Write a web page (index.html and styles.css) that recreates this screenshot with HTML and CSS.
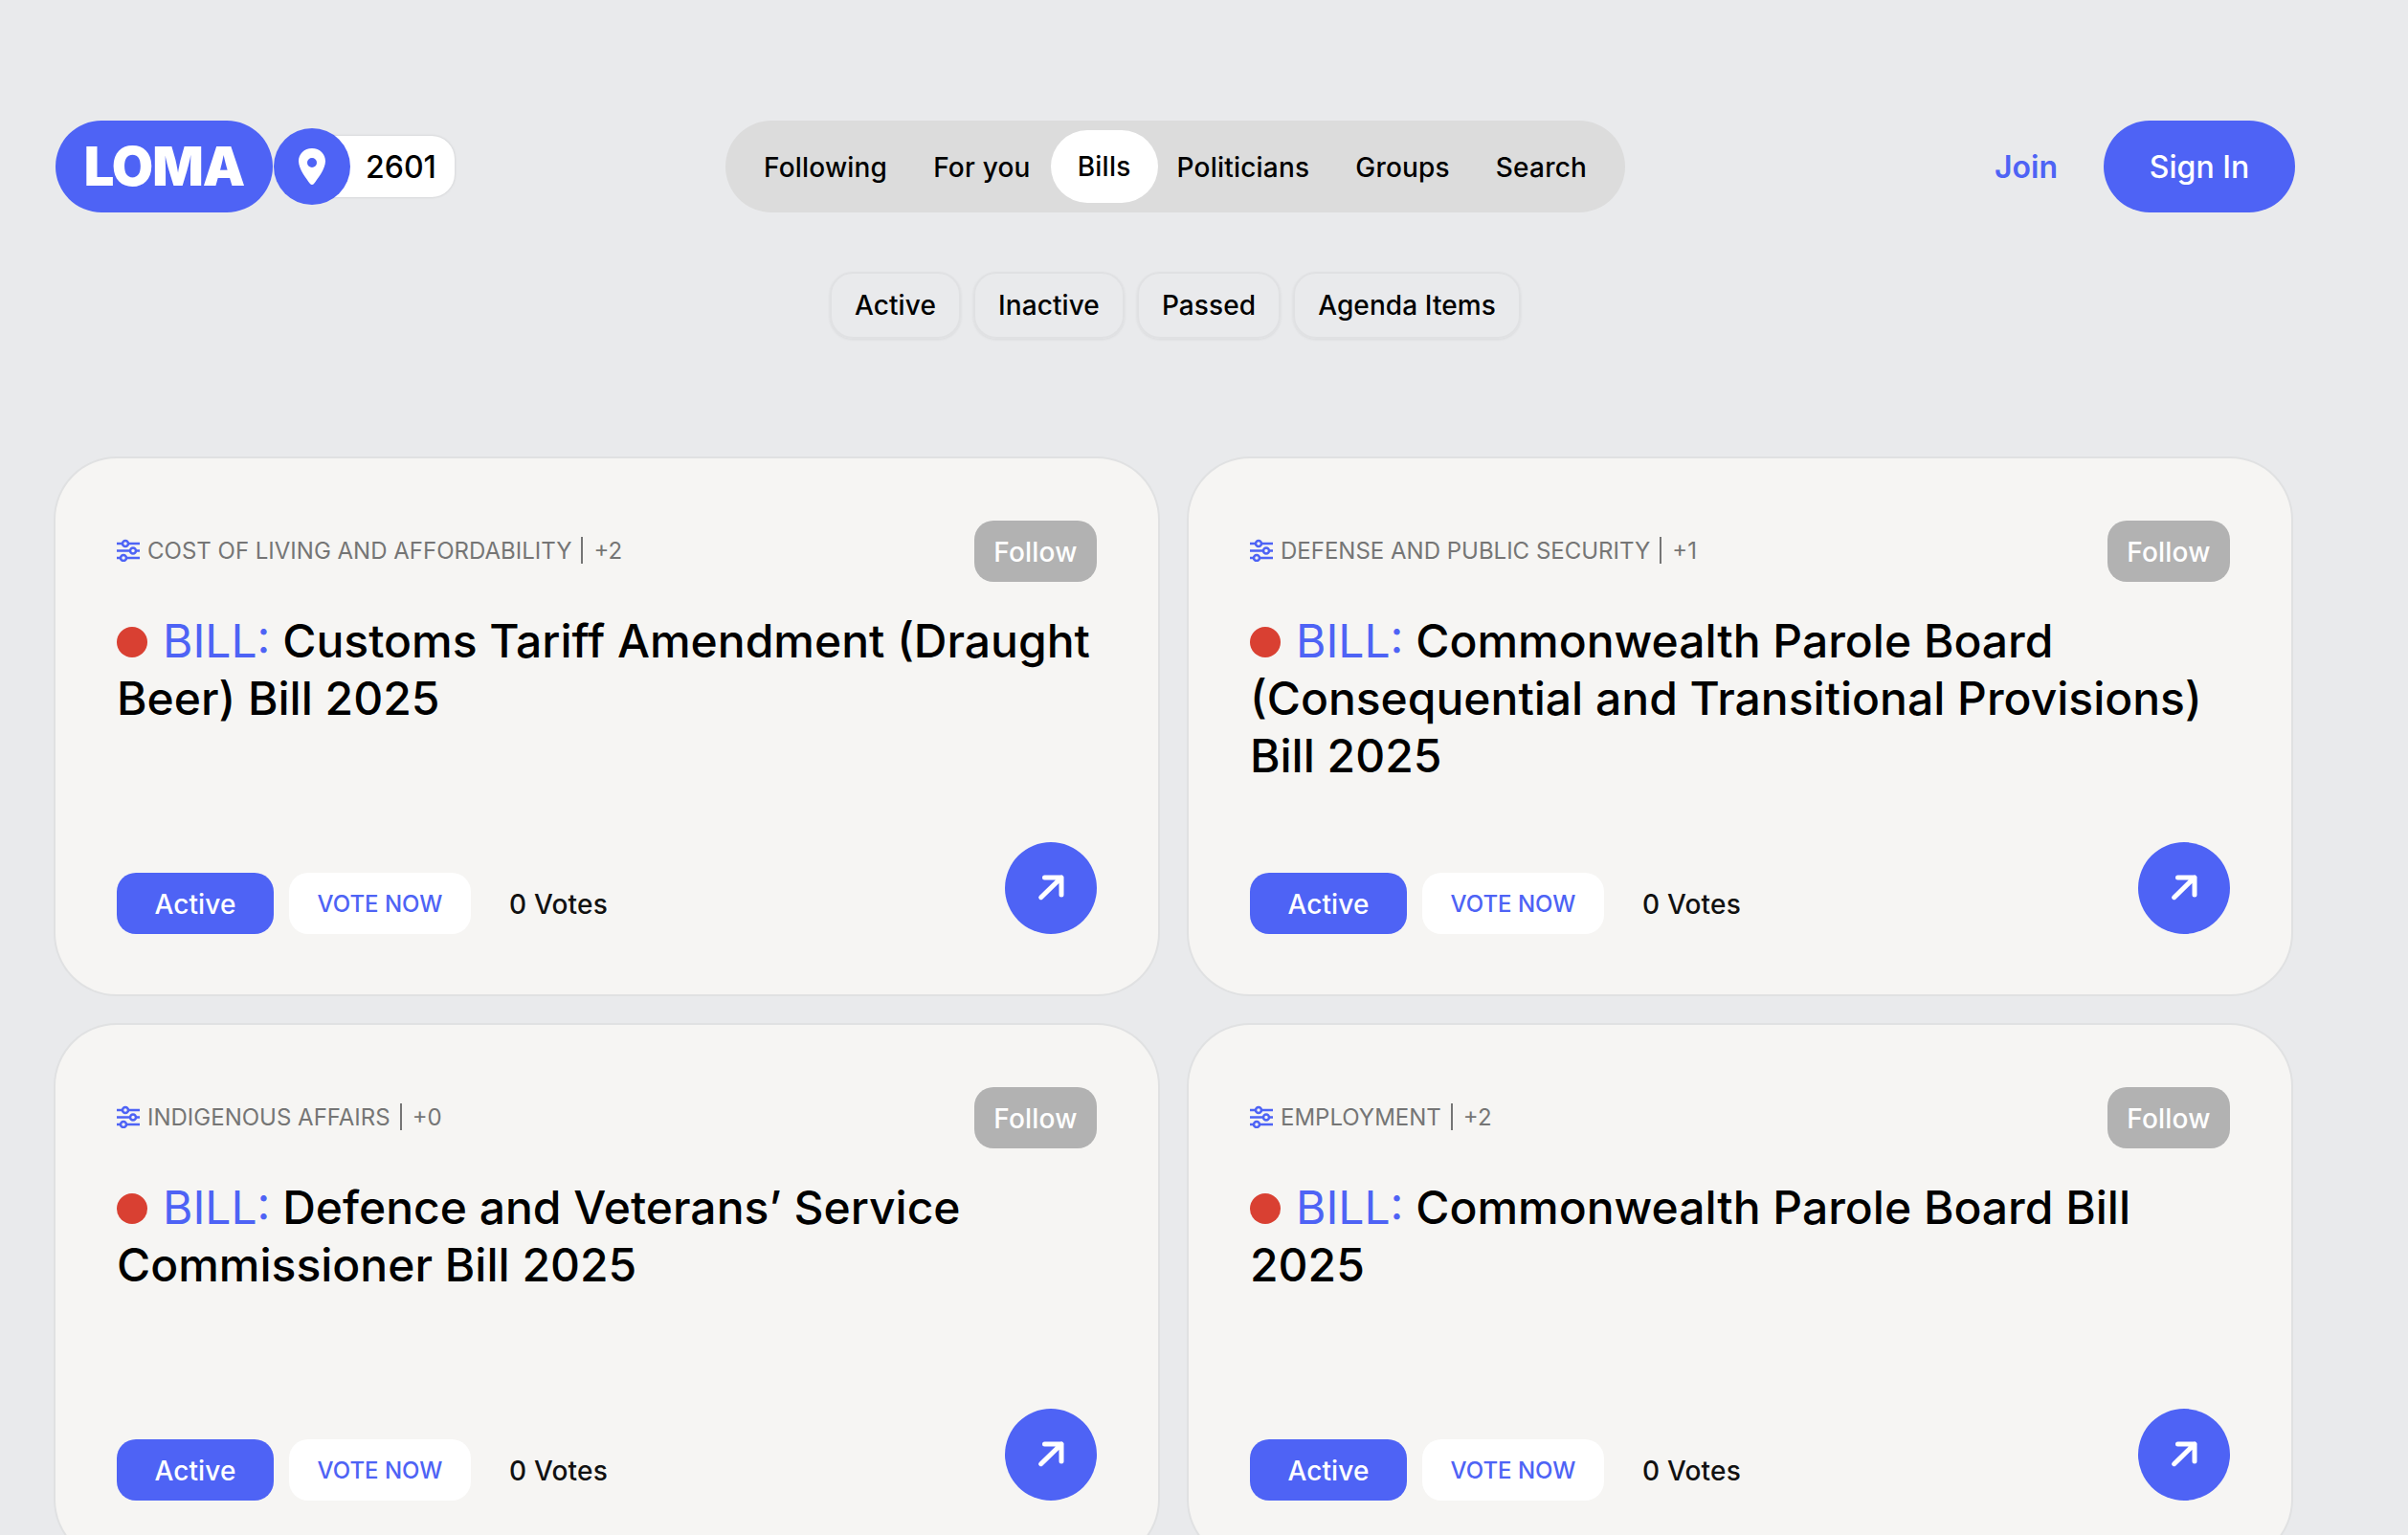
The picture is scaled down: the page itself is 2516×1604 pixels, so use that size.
FILE: index.html
```html
<!DOCTYPE html>
<html>
<head>
  <title>LOMA Bills</title>
  <meta charset="UTF-8">
  <link rel="stylesheet" href="styles.css">
</head>
<body>
<div class="page">
  <header class="top">
    <div class="brand">
      <a class="logo">LOMA</a>
      <span class="pin">
        <svg width="32" height="40" viewBox="0 0 32 40"><path fill="#fff" fill-rule="evenodd" d="M16 1C7.700 1 2 7.200 2 14.500c0 8 8.300 18.500 12 23.500 1 1.300 3 1.300 4 0 3.700-5 12-15.500 12-23.500C30 7.200 24.300 1 16 1zm0 10a5 5 0 1 1 0 10 5 5 0 0 1 0-10z"/></svg>
      </span>
      <span class="code">2601</span>
    </div>
    <nav class="tabs">
      <a>Following</a>
      <a>For you</a>
      <a class="on">Bills</a>
      <a>Politicians</a>
      <a>Groups</a>
      <a>Search</a>
    </nav>
    <div class="auth">
      <a class="join">Join</a>
      <a class="signin">Sign In</a>
    </div>
  </header>

  <div class="filters">
    <a>Active</a>
    <a>Inactive</a>
    <a>Passed</a>
    <a>Agenda Items</a>
  </div>

  <main class="cards">
    <article class="card">
      <div class="card-top">
        <div class="topic">
          <svg class="sliders" width="24" height="24" viewBox="0 0 24 24"><g fill="none" stroke="#4e63f5" stroke-width="2.500"><path d="M0 5h24M0 12.500h24M0 20h24"/><circle cx="9" cy="5" r="3" fill="#f6f5f3"/><circle cx="17" cy="12.500" r="3" fill="#f6f5f3"/><circle cx="7" cy="20" r="3" fill="#f6f5f3"/></g></svg>
          <span>COST OF LIVING AND AFFORDABILITY</span><i class="bar"></i><span>+2</span>
        </div>
        <a class="follow">Follow</a>
      </div>
      <h2 class="title"><i class="dot"></i><b>BILL:</b> Customs Tariff Amendment (Draught Beer) Bill 2025</h2>
      <div class="card-foot">
        <div class="foot-left">
          <span class="status">Active</span>
          <a class="vote">VOTE NOW</a>
          <span class="votes">0 Votes</span>
        </div>
        <a class="go"><svg width="32" height="32" viewBox="0 0 32 32"><path fill="none" stroke="#fff" stroke-width="5" stroke-linecap="round" stroke-linejoin="round" d="M5.700 25.700 27 5M9.500 5H27v18"/></svg></a>
      </div>
    </article>

    <article class="card">
      <div class="card-top">
        <div class="topic">
          <svg class="sliders" width="24" height="24" viewBox="0 0 24 24"><g fill="none" stroke="#4e63f5" stroke-width="2.500"><path d="M0 5h24M0 12.500h24M0 20h24"/><circle cx="9" cy="5" r="3" fill="#f6f5f3"/><circle cx="17" cy="12.500" r="3" fill="#f6f5f3"/><circle cx="7" cy="20" r="3" fill="#f6f5f3"/></g></svg>
          <span>DEFENSE AND PUBLIC SECURITY</span><i class="bar"></i><span>+1</span>
        </div>
        <a class="follow">Follow</a>
      </div>
      <h2 class="title"><i class="dot"></i><b>BILL:</b> Commonwealth Parole Board (Consequential and Transitional Provisions) Bill 2025</h2>
      <div class="card-foot">
        <div class="foot-left">
          <span class="status">Active</span>
          <a class="vote">VOTE NOW</a>
          <span class="votes">0 Votes</span>
        </div>
        <a class="go"><svg width="32" height="32" viewBox="0 0 32 32"><path fill="none" stroke="#fff" stroke-width="5" stroke-linecap="round" stroke-linejoin="round" d="M5.700 25.700 27 5M9.500 5H27v18"/></svg></a>
      </div>
    </article>

    <article class="card">
      <div class="card-top">
        <div class="topic">
          <svg class="sliders" width="24" height="24" viewBox="0 0 24 24"><g fill="none" stroke="#4e63f5" stroke-width="2.500"><path d="M0 5h24M0 12.500h24M0 20h24"/><circle cx="9" cy="5" r="3" fill="#f6f5f3"/><circle cx="17" cy="12.500" r="3" fill="#f6f5f3"/><circle cx="7" cy="20" r="3" fill="#f6f5f3"/></g></svg>
          <span>INDIGENOUS AFFAIRS</span><i class="bar"></i><span>+0</span>
        </div>
        <a class="follow">Follow</a>
      </div>
      <h2 class="title"><i class="dot"></i><b>BILL:</b> Defence and Veterans’ Service Commissioner Bill 2025</h2>
      <div class="card-foot">
        <div class="foot-left">
          <span class="status">Active</span>
          <a class="vote">VOTE NOW</a>
          <span class="votes">0 Votes</span>
        </div>
        <a class="go"><svg width="32" height="32" viewBox="0 0 32 32"><path fill="none" stroke="#fff" stroke-width="5" stroke-linecap="round" stroke-linejoin="round" d="M5.700 25.700 27 5M9.500 5H27v18"/></svg></a>
      </div>
    </article>

    <article class="card">
      <div class="card-top">
        <div class="topic">
          <svg class="sliders" width="24" height="24" viewBox="0 0 24 24"><g fill="none" stroke="#4e63f5" stroke-width="2.500"><path d="M0 5h24M0 12.500h24M0 20h24"/><circle cx="9" cy="5" r="3" fill="#f6f5f3"/><circle cx="17" cy="12.500" r="3" fill="#f6f5f3"/><circle cx="7" cy="20" r="3" fill="#f6f5f3"/></g></svg>
          <span>EMPLOYMENT</span><i class="bar"></i><span>+2</span>
        </div>
        <a class="follow">Follow</a>
      </div>
      <h2 class="title"><i class="dot"></i><b>BILL:</b> Commonwealth Parole Board Bill 2025</h2>
      <div class="card-foot">
        <div class="foot-left">
          <span class="status">Active</span>
          <a class="vote">VOTE NOW</a>
          <span class="votes">0 Votes</span>
        </div>
        <a class="go"><svg width="32" height="32" viewBox="0 0 32 32"><path fill="none" stroke="#fff" stroke-width="5" stroke-linecap="round" stroke-linejoin="round" d="M5.700 25.700 27 5M9.500 5H27v18"/></svg></a>
      </div>
    </article>
  </main>
</div>
</body>
</html>
```
FILE: styles.css
```css
html,
body {
  margin: 0;
  height: 100%;
  background-color: #e9eaec;
  color: #000;
  font-family: "Inter", "Liberation Sans", sans-serif;
}
.page {
  height: 100vh;
  overflow: hidden;
  box-sizing: border-box;
  padding: 126px 118px 0 58px;
}
.top {
  display: grid;
  grid-template-columns: 1fr auto 1fr;
  align-items: center;
  height: 96px;
}
.brand {
  display: flex;
  align-items: center;
}
.logo {
  display: flex;
  align-items: center;
  justify-content: center;
  width: 227px;
  height: 96px;
  border-radius: 48px;
  background-color: #4e63f5;
  color: #fff;
  font-size: 56px;
  font-weight: 900;
  letter-spacing: -1px;
}
.pin {
  position: relative;
  display: flex;
  align-items: center;
  justify-content: center;
  width: 80px;
  height: 80px;
  margin-left: 1px;
  border-radius: 50%;
  background-color: #4e63f5;
}
.code {
  display: flex;
  align-items: center;
  height: 64px;
  margin-left: -40px;
  padding: 0 19px 0 56px;
  border-radius: 0 24px 24px 0;
  background-color: #fff;
  box-shadow: 0 0 3px rgba(0, 0, 0, 0.15);
  font-size: 32px;
  font-weight: 500;
}
.tabs {
  display: flex;
  align-items: center;
  height: 96px;
  padding: 0 16px;
  border-radius: 48px;
  background-color: #dcdcdc;
  font-size: 28px;
  font-weight: 500;
  letter-spacing: 0.2px;
}
.tabs a {
  padding: 2px 24px 0;
}
.tabs a.on {
  display: flex;
  align-items: center;
  justify-content: center;
  box-sizing: border-box;
  width: 112px;
  height: 76px;
  margin: 0 -4px 0 -3px;
  padding: 0;
  border-radius: 38px;
  background-color: #fff;
}
.auth {
  display: flex;
  align-items: center;
  justify-content: flex-end;
  gap: 48px;
}
.join {
  color: #4e63f5;
  font-size: 32px;
  font-weight: 600;
}
.signin {
  display: flex;
  align-items: center;
  justify-content: center;
  width: 200px;
  height: 96px;
  border-radius: 48px;
  background-color: #4e63f5;
  color: #fff;
  font-size: 32px;
  font-weight: 500;
}
.filters {
  display: flex;
  justify-content: center;
  gap: 13px;
  margin-top: 62px;
}
.filters a {
  display: flex;
  align-items: center;
  height: 66px;
  padding: 0 24px;
  border: 2px solid #e0e1e3;
  border-radius: 24px;
  box-shadow: 0 1px 3px rgba(0, 0, 0, 0.07);
  font-size: 28px;
  font-weight: 500;
  letter-spacing: 0.1px;
}
.cards {
  display: grid;
  grid-template-columns: 1152px 1152px;
  gap: 32px;
  margin-top: 125px;
}
.card {
  display: flex;
  flex-direction: column;
  box-sizing: border-box;
  height: 560px;
  padding: 65px 64px 63px;
  border-radius: 64px;
  background-color: #f6f5f3;
  box-shadow: 0 0 0 2px #e0e1e2;
}
.card-top {
  display: flex;
  align-items: center;
  justify-content: space-between;
}
.topic {
  display: flex;
  align-items: center;
  color: #757575;
  font-size: 24px;
  margin-top: -2px;
}
.sliders {
  margin-right: 8px;
}
.bar {
  width: 2px;
  height: 28px;
  margin: 0 11px 0 10px;
  background-color: #757575;
}
.follow {
  display: flex;
  align-items: center;
  justify-content: center;
  box-sizing: border-box;
  width: 128px;
  height: 64px;
  padding-top: 2px;
  border-radius: 20px;
  background-color: #b2b2b2;
  color: #fff;
  font-size: 28px;
  font-weight: 500;
  letter-spacing: 0.2px;
}
.title {
  margin: 32px 0 0;
  font-size: 48px;
  font-weight: 500;
  line-height: 60px;
}
.title b {
  color: #4e63f5;
  font-weight: 400;
}
.dot {
  display: inline-block;
  width: 32px;
  height: 32px;
  margin-right: 16px;
  border-radius: 50%;
  background-color: #d94032;
}
.card-foot {
  display: flex;
  align-items: flex-end;
  justify-content: space-between;
  margin-top: auto;
}
.foot-left {
  display: flex;
  align-items: center;
}
.status {
  display: flex;
  align-items: center;
  justify-content: center;
  box-sizing: border-box;
  width: 164px;
  height: 64px;
  padding-top: 2px;
  border-radius: 20px;
  background-color: #4e63f5;
  color: #fff;
  font-size: 28px;
  font-weight: 500;
  letter-spacing: 0.1px;
}
.vote {
  display: flex;
  align-items: center;
  justify-content: center;
  width: 190px;
  height: 64px;
  margin-left: 16px;
  border-radius: 20px;
  background-color: #fff;
  color: #4e63f5;
  font-size: 24px;
  font-weight: 500;
}
.votes {
  margin-left: 40px;
  padding-top: 2px;
  color: #111;
  font-size: 28px;
  font-weight: 500;
  letter-spacing: 0.2px;
}
.go {
  display: flex;
  align-items: center;
  justify-content: center;
  width: 96px;
  height: 96px;
  border-radius: 50%;
  background-color: #4e63f5;
}
```
